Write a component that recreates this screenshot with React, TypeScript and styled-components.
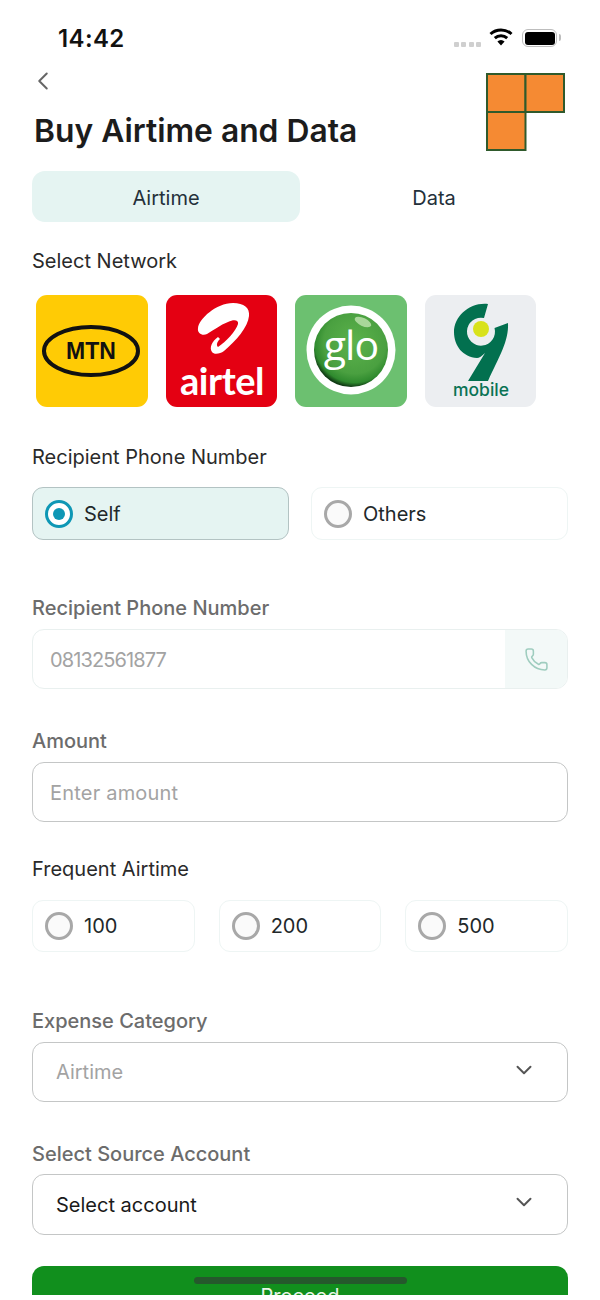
import React from 'react';
import styled, { createGlobalStyle } from 'styled-components';
import { ChevronDown, ChevronLeft, Phone } from 'lucide-react';

const GlobalStyle = createGlobalStyle`
  html, body {
    margin: 0;
    padding: 0;
    background: #fff;
  }
  * {
    box-sizing: border-box;
  }
`;

const Screen = styled.div`
  position: relative;
  width: 600px;
  height: 1295px;
  overflow: hidden;
  background: #fff;
  font-family: Inter, "Noto Sans", sans-serif;
  color: #1f2a2c;
`;

const StatusBar = styled.div`
  display: flex;
  align-items: center;
  justify-content: space-between;
  height: 73px;
  padding: 4px 43px 0 58px;
`;

const Time = styled.span`
  font-size: 24px;
  font-weight: 600;
  color: #111;
  letter-spacing: 0.4px;
`;

const StatusIcons = styled.div`
  display: flex;
  align-items: center;
  gap: 8px;
  margin-top: -1px;
  svg {
    margin-top: -3px;
    margin-right: 1px;
  }
`;

const SignalDots = styled.div`
  display: flex;
  gap: 2.5px;
  margin-top: 12px;
  span {
    width: 5px;
    height: 5px;
    border-radius: 1px;
    background: #cfcfcf;
  }
`;

const Battery = styled.div`
  position: relative;
  width: 35px;
  height: 18px;
  border: 1.5px solid #bdbdbd;
  border-radius: 6px;
  padding: 1.5px;
  &::before {
    content: '';
    display: block;
    height: 100%;
    border-radius: 3px;
    background: #000;
  }
  &::after {
    content: '';
    position: absolute;
    right: -4.5px;
    top: 4px;
    width: 2px;
    height: 7px;
    border-radius: 0 2px 2px 0;
    background: #bdbdbd;
  }
`;

const Body = styled.div`
  padding: 0 32px;
`;

const Header = styled.div`
  display: flex;
  justify-content: space-between;
  align-items: flex-start;
  height: 98px;
  margin-right: 3px;
`;

const BackButton = styled.div`
  display: flex;
  color: #666;
  margin-left: -4px;
  margin-top: -6px;
  height: 27px;
  align-items: center;
`;

const Title = styled.h1`
  margin: 19px 0 0 2px;
  font-size: 31.8px;
  line-height: 36px;
  font-weight: 600;
  color: #1c1c1c;
`;

const Tabs = styled.div`
  display: grid;
  grid-template-columns: 1fr 1fr;
  height: 51px;
`;

const Tab = styled.div<{ $active?: boolean }>`
  display: flex;
  align-items: center;
  justify-content: center;
  padding-top: 2px;
  border-radius: 13px;
  font-size: 20px;
  background: ${(p) => (p.$active ? '#e5f4f2' : 'transparent')};
  color: #24303a;
`;

const Label = styled.div<{ $top: number; $muted?: boolean }>`
  margin-top: ${(p) => p.$top}px;
  font-size: 20px;
  line-height: 24px;
  font-weight: ${(p) => (p.$muted ? 500 : 400)};
  color: ${(p) => (p.$muted ? '#6c6c6c' : '#2a2a2a')};
`;

const NetworkRow = styled.div`
  display: flex;
  gap: 18px;
  margin: 22px 0 0 4px;
`;

const NetworkTile = styled.div<{ $bg: string }>`
  width: 111.5px;
  height: 112px;
  border-radius: 11px;
  overflow: hidden;
  background: ${(p) => p.$bg};
  svg {
    display: block;
  }
`;

const OptionRow = styled.div<{ $cols: number; $gap: number; $top: number; $height: number }>`
  display: grid;
  grid-template-columns: repeat(${(p) => p.$cols}, 1fr);
  grid-auto-rows: ${(p) => p.$height}px;
  gap: ${(p) => p.$gap}px;
  margin-top: ${(p) => p.$top}px;
`;

const Option = styled.div<{ $active?: boolean }>`
  display: flex;
  align-items: center;
  gap: 11px;
  padding-left: 12px;
  border-radius: 11px;
  border: 1px solid ${(p) => (p.$active ? '#b3c3c3' : '#eef5f4')};
  background: ${(p) => (p.$active ? '#e5f4f2' : '#fff')};
  font-size: 20px;
  color: #22282a;
`;

const Radio = styled.span<{ $active?: boolean }>`
  display: flex;
  align-items: center;
  justify-content: center;
  width: 28px;
  height: 28px;
  border-radius: 50%;
  border: 3px solid ${(p) => (p.$active ? '#0e97b5' : '#a8a8a8')};
  background: ${(p) => (p.$active ? '#fff' : '#fafafa')};
  &::after {
    content: '';
    display: ${(p) => (p.$active ? 'block' : 'none')};
    width: 12px;
    height: 12px;
    border-radius: 50%;
    background: #0e97b5;
  }
`;

const InputBox = styled.div<{ $soft?: boolean; $top?: number; $height?: number }>`
  display: flex;
  align-items: center;
  justify-content: space-between;
  height: ${(p) => p.$height ?? 60}px;
  margin-top: ${(p) => p.$top ?? 9}px;
  padding-left: 17px;
  border-radius: 12px;
  border: 1px solid ${(p) => (p.$soft ? '#e9f0ef' : '#c4c6c6')};
  overflow: hidden;
  font-size: 20px;
  background: #fff;
`;

const InputText = styled.span<{ $tight?: boolean }>`
  padding-top: 2px;
  color: #a3a3a3;
  letter-spacing: ${(p) => (p.$tight ? '-0.9px' : '0.2px')};
`;

const SelectText = styled.span<{ $value?: boolean }>`
  margin-left: 6px;
  color: ${(p) => (p.$value ? '#1a1a1a' : '#a3a3a3')};
`;

const PhoneAddon = styled.div`
  display: flex;
  align-items: center;
  justify-content: center;
  width: 62px;
  height: 100%;
  background: #f3f9f8;
  color: #9fcdbf;
`;

const SelectArrow = styled.div`
  display: flex;
  margin: -5px 30px 0 0;
  color: #555;
`;

const ProceedButton = styled.button`
  display: block;
  width: 100%;
  height: 60px;
  margin-top: 31px;
  border: 0;
  border-radius: 12px;
  background: #118f1d;
  color: #e8f5e8;
  font-family: inherit;
  font-size: 20px;
`;

const HomeIndicator = styled.div`
  position: absolute;
  left: 194px;
  top: 1277px;
  width: 213px;
  height: 7px;
  border-radius: 4px;
  background: #25582c;
`;

function WifiIcon() {
  return (
    <svg width="24" height="19" viewBox="0 0 24 19">
      <path d="M1.5 7a15.500 15.500 0 0 1 21 0" fill="none" stroke="#000" strokeWidth="3" />
      <path d="M5.800 11.200a9.200 9.200 0 0 1 12.400 0" fill="none" stroke="#000" strokeWidth="3" />
      <path d="M12 18.500l-3.600-4a5 5 0 0 1 7.200 0z" fill="#000" />
    </svg>
  );
}

function BrandMark() {
  return (
    <svg width="79" height="78" viewBox="0 0 79 78">
      <g fill="#f58a33" stroke="#2f5a2c" strokeWidth="2">
        <rect x="1" y="1" width="38.500" height="38" />
        <rect x="39.500" y="1" width="38.500" height="38" />
        <rect x="1" y="39" width="38.500" height="38" />
      </g>
    </svg>
  );
}

function MtnLogo() {
  return (
    <svg width="112" height="112" viewBox="0 0 112 112">
      <ellipse cx="55" cy="56" rx="47" ry="24" fill="none" stroke="#111" strokeWidth="4" />
      <text x="55" y="64" textAnchor="middle" fontFamily="Liberation Sans, sans-serif" fontWeight="700" fontSize="23" fill="#111">
        MTN
      </text>
    </svg>
  );
}

function AirtelLogo() {
  return (
    <svg width="112" height="112" viewBox="0 0 112 112">
      <path
        d="M32 33C33 24 50 8 67 8C78 8 84 13 83 21C82 32 70 46 58 56C54 59 48 60 46 57C43 53 46 46 52 42L54 44C51 47 50 50 52 52C60 47 70 36 72 29C73 25 68 24 62 27C54 30 48 35 41 39C37 41 31 39 32 33Z"
        fill="#fff"
      />
      <text x="56" y="100" textAnchor="middle" fontFamily="Lato, sans-serif" fontWeight="700" fontSize="38" fill="#fff" letterSpacing="-0.5">
        airtel
      </text>
    </svg>
  );
}

function GloLogo() {
  return (
    <svg width="112" height="112" viewBox="0 0 112 112">
      <defs>
        <radialGradient id="gloBall" cx="55%" cy="40%" r="60%">
          <stop offset="0%" stopColor="#5cb24c" />
          <stop offset="70%" stopColor="#4aa040" />
          <stop offset="90%" stopColor="#2f8a2e" />
          <stop offset="100%" stopColor="#103a14" />
        </radialGradient>
      </defs>
      <circle cx="56" cy="55" r="44.500" fill="#fff" />
      <circle cx="56" cy="55" r="37" fill="url(#gloBall)" />
      <ellipse cx="68" cy="27" rx="9" ry="4" fill="#a9d79a" transform="rotate(25 68 27)" />
      <text x="56" y="65" textAnchor="middle" fontFamily="Open Sans, sans-serif" fontWeight="500" fontSize="41" letterSpacing="-1" fill="#fff">
        glo
      </text>
    </svg>
  );
}

function NineMobileLogo() {
  return (
    <svg width="112" height="112" viewBox="0 0 112 112">
      <path
        d="M63 9L59 23A14 14 0 1 0 69.500 33L83 28C84 46 74 62 63 86H43L60 58C57 61 54 63 52 63C38 62 29 51 29 37C29 21 45 7 63 9Z"
        fill="#02704f"
      />
      <circle cx="56" cy="34" r="8" fill="#d8e21c" />
      <text x="56" y="101" textAnchor="middle" fontFamily="Inter, sans-serif" fontWeight="500" fontSize="17.5" fill="#0a7355">
        mobile
      </text>
    </svg>
  );
}

export default function App() {
  return (
    <>
      <GlobalStyle />
      <Screen>
        <StatusBar>
          <Time>14:42</Time>
          <StatusIcons>
            <SignalDots>
              <span />
              <span />
              <span />
              <span />
            </SignalDots>
            <WifiIcon />
            <Battery />
          </StatusIcons>
        </StatusBar>
        <Body>
          <Header>
            <div>
              <BackButton>
                <ChevronLeft size={30} strokeWidth={1.6} />
              </BackButton>
              <Title>Buy Airtime and Data</Title>
            </div>
            <BrandMark />
          </Header>
          <Tabs>
            <Tab $active>Airtime</Tab>
            <Tab>Data</Tab>
          </Tabs>
          <Label $top={27}>Select Network</Label>
          <NetworkRow>
            <NetworkTile $bg="#ffcb05">
              <MtnLogo />
            </NetworkTile>
            <NetworkTile $bg="#e40012">
              <AirtelLogo />
            </NetworkTile>
            <NetworkTile $bg="#6cc070">
              <GloLogo />
            </NetworkTile>
            <NetworkTile $bg="#eceef1">
              <NineMobileLogo />
            </NetworkTile>
          </NetworkRow>
          <Label $top={38}>Recipient Phone Number</Label>
          <OptionRow $cols={2} $gap={22} $top={18} $height={53}>
            <Option $active>
              <Radio $active />
              Self
            </Option>
            <Option>
              <Radio />
              Others
            </Option>
          </OptionRow>
          <Label $top={56} $muted>
            Recipient Phone Number
          </Label>
          <InputBox $soft>
            <InputText $tight>08132561877</InputText>
            <PhoneAddon>
              <Phone size={25} strokeWidth={1.5} />
            </PhoneAddon>
          </InputBox>
          <Label $top={40} $muted>
            Amount
          </Label>
          <InputBox>
            <InputText>Enter amount</InputText>
          </InputBox>
          <Label $top={35}>Frequent Airtime</Label>
          <OptionRow $cols={3} $gap={24} $top={19} $height={52}>
            <Option>
              <Radio />
              100
            </Option>
            <Option>
              <Radio />
              200
            </Option>
            <Option>
              <Radio />
              500
            </Option>
          </OptionRow>
          <Label $top={57} $muted>
            Expense Category
          </Label>
          <InputBox>
            <SelectText>Airtime</SelectText>
            <SelectArrow>
              <ChevronDown size={26} strokeWidth={1.8} />
            </SelectArrow>
          </InputBox>
          <Label $top={40} $muted>
            Select Source Account
          </Label>
          <InputBox $top={8} $height={61}>
            <SelectText $value>Select account</SelectText>
            <SelectArrow>
              <ChevronDown size={26} strokeWidth={1.8} />
            </SelectArrow>
          </InputBox>
          <ProceedButton>Proceed</ProceedButton>
        </Body>
        <HomeIndicator />
      </Screen>
    </>
  );
}
